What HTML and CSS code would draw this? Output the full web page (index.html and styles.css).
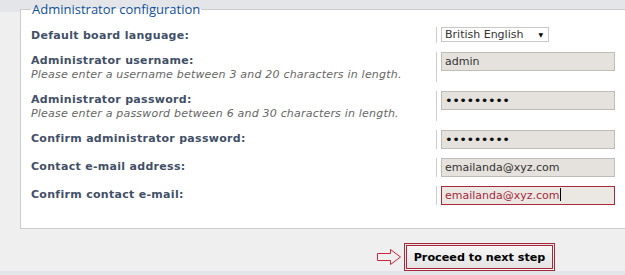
FILE: index.html
```html
<!DOCTYPE html>
<html lang="en">
<head>
    <meta charset="UTF-8">
    <title>Administrator configuration</title>
    <link rel="stylesheet" href="styles.css">
</head>
<body>
    <div class="panel">
        <fieldset class="config">
            <legend>Administrator configuration</legend>

            <dl>
                <dt><label>Default board language:</label></dt>
                <dd>
                    <div class="select">
                        <span>British English</span>
                        <span class="caret">&#9660;</span>
                    </div>
                </dd>
            </dl>

            <dl>
                <dt>
                    <label>Administrator username:</label>
                    <span class="explain">Please enter a username between 3 and 20 characters in length.</span>
                </dt>
                <dd><input class="inputbox" type="text" value="admin"></dd>
            </dl>

            <dl>
                <dt>
                    <label>Administrator password:</label>
                    <span class="explain">Please enter a password between 6 and 30 characters in length.</span>
                </dt>
                <dd><input class="inputbox password" type="password" value="123456789"></dd>
            </dl>

            <dl class="single">
                <dt><label>Confirm administrator password:</label></dt>
                <dd><input class="inputbox password" type="password" value="123456789"></dd>
            </dl>

            <dl>
                <dt><label>Contact e-mail address:</label></dt>
                <dd><input class="inputbox" type="text" value="emailanda@xyz.com"></dd>
            </dl>

            <dl>
                <dt><label>Confirm contact e-mail:</label></dt>
                <dd>
                    <div class="inputbox focused">emailanda@xyz.com<span class="cursor"></span></div>
                </dd>
            </dl>
        </fieldset>

        <div class="submit-buttons">
            <svg class="arrow" width="26" height="18" viewBox="0 0 26 18">
                <polygon points="1.5,5.5 14.5,5.5 14.5,1.5 24.5,9 14.5,16.5 14.5,12.5 1.5,12.5" fill="none" stroke="#c8283a" stroke-width="1"/>
            </svg>
            <button class="button1">Proceed to next step</button>
        </div>
    </div>
</body>
</html>
```

FILE: styles.css
```css
* {
    margin: 0;
    padding: 0;
    box-sizing: border-box;
}

body {
    background: linear-gradient(#e3e5e8 0, #e3e5e8 12px, #efefef 12px);
    font-family: "DejaVu Sans", Verdana, sans-serif;
    font-size: 11px;
    color: #425067;
    overflow: hidden;
}

.panel {
    padding-top: 3px;
}

.config {
    margin-left: 20px;
    margin-right: -20px;
    border: 1px solid #cccccc;
    background-color: #ffffff;
    padding: 11px 0 20px 10px;
    height: 226px;
}

.config legend {
    margin-left: 0;
    padding: 0 1px;
    font-family: "Open Sans", "Liberation Sans", sans-serif;
    font-size: 13px;
    line-height: 13px;
    color: #115098;
}

.config dl {
    display: flex;
    margin-bottom: 9px;
}

.config dl.single {
    margin-top: 1px;
}

.config dt {
    width: 405px;
    padding-top: 2px;
}

.config dt label {
    display: block;
    font-weight: bold;
    line-height: 14px;
    letter-spacing: 0.3px;
}

.explain {
    display: block;
    font-style: italic;
    color: #666666;
    line-height: 14px;
    letter-spacing: 0.2px;
}

.config dd {
    border-left: 1px solid #cccccc;
    padding-left: 4px;
}

.select {
    width: 108px;
    height: 15px;
    border: 1px solid #c8c8c8;
    background-color: #ffffff;
    display: flex;
    justify-content: space-between;
    align-items: center;
    padding: 0 5px 0 3px;
    font-size: 11px;
    color: #333333;
}

.select .caret {
    font-size: 6px;
    color: #000000;
}

.inputbox {
    display: block;
    width: 174px;
    height: 19px;
    border: 1px solid #c0bcb6;
    background-color: #e5e1dc;
    padding: 0 3px;
    font-family: "DejaVu Sans", Verdana, sans-serif;
    font-size: 11px;
    line-height: 17px;
    color: #333333;
    outline: none;
}

.inputbox.password {
    font-size: 13px;
    color: #111111;
    letter-spacing: -0.5px;
}

.inputbox.focused {
    border-color: #a8283d;
    color: #a8283d;
    background-color: #ebe8e4;
}

.cursor {
    display: inline-block;
    width: 1px;
    height: 13px;
    background-color: #000000;
    vertical-align: -2px;
}

.submit-buttons {
    display: flex;
    align-items: center;
    gap: 2px;
    padding: 14px 0 0 376px;
}

.arrow {
    display: block;
}

.button1 {
    width: 151px;
    height: 28px;
    border: 3px double #a8283d;
    background: linear-gradient(#f6f6f6, #e4e4e4);
    font-family: "DejaVu Sans", Verdana, sans-serif;
    font-size: 11.2px;
    font-weight: bold;
    color: #000000;
}
```
